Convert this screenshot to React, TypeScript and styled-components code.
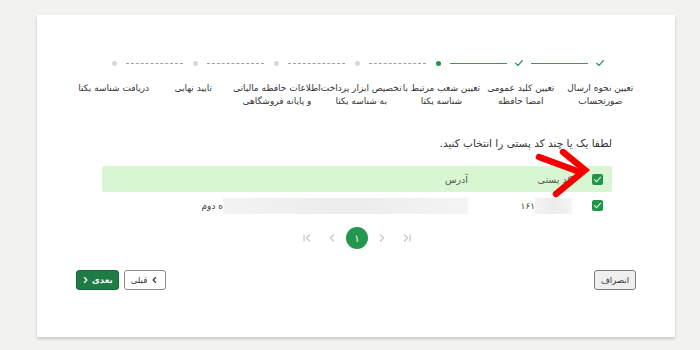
import React from 'react'
import styled, { createGlobalStyle } from 'styled-components'

type StepState = 'done' | 'current' | 'todo'

const steps: { lines: string[]; state: StepState }[] = [
  { lines: ['تعیین نحوه ارسال', 'صورتحساب'], state: 'done' },
  { lines: ['تعیین کلید عمومی', 'امضا حافظه'], state: 'done' },
  { lines: ['تعیین شعب مرتبط با', 'شناسه یکتا'], state: 'current' },
  { lines: ['تخصیص ابزار پرداخت', 'به شناسه یکتا'], state: 'todo' },
  { lines: ['اطلاعات حافظه مالیاتی', 'و پایانه فروشگاهی'], state: 'todo' },
  { lines: ['تایید نهایی'], state: 'todo' },
  { lines: ['دریافت شناسه یکتا'], state: 'todo' },
]

const CheckIcon = ({ color = '#2e9e57', size = 10 }: { color?: string; size?: number }) => (
  <svg width={size} height={size} viewBox="0 0 12 12">
    <path d="M2 6.3 L4.8 9 L10 3" fill="none" stroke={color} strokeWidth="1.4" strokeLinecap="round" strokeLinejoin="round" />
  </svg>
)

const Chevron = ({ dir }: { dir: 'left' | 'right' }) => (
  <svg width="7" height="8" viewBox="0 0 8 8">
    <path
      d={dir === 'left' ? 'M5.2 1.2 L2.4 4 L5.2 6.8' : 'M2.8 1.2 L5.6 4 L2.8 6.8'}
      fill="none"
      stroke="currentColor"
      strokeWidth="1.4"
      strokeLinecap="round"
      strokeLinejoin="round"
    />
  </svg>
)

const PagerIcon = ({ kind }: { kind: 'first' | 'prev' | 'next' | 'last' }) => (
  <svg width="10" height="10" viewBox="0 0 10 10">
    {kind === 'first' && <path d="M2 2 V8 M7.5 2 L4.5 5 L7.5 8" />}
    {kind === 'prev' && <path d="M6.5 2 L3.5 5 L6.5 8" />}
    {kind === 'next' && <path d="M3.5 2 L6.5 5 L3.5 8" />}
    {kind === 'last' && <path d="M8 2 V8 M2.5 2 L5.5 5 L2.5 8" />}
  </svg>
)

const App = () => {
  return (
    <Page>
      <GlobalStyle />
      <Card>
        <Stepper>
          <Track>
            {steps.map((s, i) => (
              <React.Fragment key={s.lines[0]}>
                {i > 0 && <Connector done={s.state !== 'todo'} />}
                <Marker>
                  {s.state === 'done' && <CheckIcon />}
                  {s.state !== 'done' && <Dot active={s.state === 'current'} />}
                </Marker>
              </React.Fragment>
            ))}
          </Track>
          <Labels>
            {steps.map((s) => (
              <Label key={s.lines[0]}>
                {s.lines.map((l) => (
                  <div key={l}>{l}</div>
                ))}
              </Label>
            ))}
          </Labels>
        </Stepper>

        <Section>
          <Hint>لطفا یک یا چند کد پستی را انتخاب کنید.</Hint>
          <TableWrap>
            <HeadRow>
              <BoxCell>
                <Checkbox>
                  <CheckIcon color="#fff" size={9} />
                </Checkbox>
              </BoxCell>
              <CodeCell>کد پستی</CodeCell>
              <AddressCell>آدرس</AddressCell>
            </HeadRow>
            <BodyRow>
              <BoxCell>
                <Checkbox>
                  <CheckIcon color="#fff" size={9} />
                </Checkbox>
              </BoxCell>
              <CodeCell>
                <Blur w={37} />
                <CellText>۱۶۱</CellText>
              </CodeCell>
              <AddressCell>
                <Blur w={245} />
                <CellText>ه دوم</CellText>
              </AddressCell>
            </BodyRow>
            <Arrow width="56" height="50" viewBox="0 0 56 50">
              <path d="M4 8 L42 22" stroke="#f40000" strokeWidth="6.5" strokeLinecap="round" />
              <path d="M28 3 L50 21 L21 45" fill="none" stroke="#f40000" strokeWidth="6.5" strokeLinejoin="miter" strokeLinecap="round" />
            </Arrow>
          </TableWrap>

          <Pager>
            <PagerButton><PagerIcon kind="first" /></PagerButton>
            <PagerButton><PagerIcon kind="prev" /></PagerButton>
            <PageCircle>۱</PageCircle>
            <PagerButton><PagerIcon kind="next" /></PagerButton>
            <PagerButton><PagerIcon kind="last" /></PagerButton>
          </Pager>
        </Section>

        <Footer>
          <CancelButton>انصراف</CancelButton>
          <NavGroup>
            <OutlineButton>
              <Chevron dir="left" />
              قبلی
            </OutlineButton>
            <PrimaryButton>
              بعدی
              <Chevron dir="right" />
            </PrimaryButton>
          </NavGroup>
        </Footer>
      </Card>
    </Page>
  )
}

const GlobalStyle = createGlobalStyle`
  html, body {
    margin: 0;
    padding: 0;
    background: #f2f2f0;
  }
  body {
    font-family: "DejaVu Sans", "Noto Sans", sans-serif;
  }
`

const Page = styled.div`
  width: 700px;
  height: 350px;
  box-sizing: border-box;
  padding: 15px 25px 13px 37px;
`

const Card = styled.div`
  direction: rtl;
  height: 322px;
  box-sizing: border-box;
  background: #fff;
  box-shadow: 0 2px 3px rgba(0, 0, 0, 0.18);
  padding: 41px 35px 0 37px;
  display: flex;
  flex-direction: column;
`

const Stepper = styled.div`
  display: flex;
  flex-direction: column;
  gap: 12px;
`

const Track = styled.div`
  display: flex;
  align-items: center;
  height: 14px;
  padding: 0 33px;
`

const Marker = styled.div`
  width: 14px;
  height: 14px;
  display: flex;
  align-items: center;
  justify-content: center;
`

const Dot = styled.span<{ active: boolean }>`
  width: 5px;
  height: 5px;
  border-radius: 50%;
  background: ${(p) => (p.active ? '#23914d' : '#d6d6d6')};
`

const Connector = styled.div<{ done: boolean }>`
  flex: 1;
  margin: 0 5px;
  border-top: ${(p) => (p.done ? '1.5px solid #2e9e57' : '1px dashed #a0a0a0')};
`

const Labels = styled.div`
  display: grid;
  grid-template-columns: repeat(7, 1fr);
`

const Label = styled.div`
  font-size: 9px;
  line-height: 13px;
  color: #333;
  text-align: center;
  white-space: nowrap;
  display: flex;
  flex-direction: column;
  align-items: center;
`

const Section = styled.div`
  padding: 0 28px;
  margin-top: 28px;
  display: flex;
  flex-direction: column;
`

const Hint = styled.div`
  font-size: 10.5px;
  color: #333;
  line-height: 14px;
  margin-bottom: 16px;
`

const TableWrap = styled.div`
  position: relative;
`

const HeadRow = styled.div`
  display: flex;
  align-items: center;
  height: 26px;
  background: #d9f6d3;
  border-radius: 2px;
  font-size: 9.5px;
  color: #555;
`

const BodyRow = styled.div`
  display: flex;
  align-items: center;
  height: 27px;
  font-size: 9px;
  color: #444;
`

const BoxCell = styled.div`
  width: 40px;
  padding-right: 9px;
  box-sizing: border-box;
  display: flex;
  align-items: center;
`

const CodeCell = styled.div`
  width: 104px;
  display: flex;
  align-items: center;
`

const AddressCell = styled.div`
  flex: 1;
  display: flex;
  align-items: center;
`

const CellText = styled.span`
  white-space: nowrap;
`

const Blur = styled.span<{ w: number }>`
  display: inline-block;
  width: ${(p) => p.w}px;
  height: 16px;
  background: linear-gradient(90deg, #f3f3f3, #ececec 50%, #f4f4f4);
`

const Checkbox = styled.span`
  width: 11px;
  height: 11px;
  border-radius: 2px;
  background: #1f9549;
  display: flex;
  align-items: center;
  justify-content: center;
`

const Arrow = styled.svg`
  position: absolute;
  top: -17px;
  right: 21px;
`

const Pager = styled.div`
  direction: ltr;
  display: flex;
  align-items: center;
  justify-content: center;
  gap: 3px;
  margin-top: 8px;
`

const PagerButton = styled.span`
  width: 22px;
  height: 22px;
  display: flex;
  align-items: center;
  justify-content: center;
  stroke: #c4c4c4;
  fill: none;
  stroke-width: 1.2;
  stroke-linecap: round;
  stroke-linejoin: round;
`

const PageCircle = styled.span`
  width: 22px;
  height: 22px;
  border-radius: 50%;
  background: #23964f;
  color: #fff;
  font-size: 10px;
  display: flex;
  align-items: center;
  justify-content: center;
`

const Footer = styled.div`
  display: flex;
  justify-content: space-between;
  align-items: center;
  margin-top: 21px;
  padding: 0 4px 0 2px;
`

const NavGroup = styled.div`
  display: flex;
  gap: 5px;
`

const BaseButton = styled.button`
  height: 20px;
  border-radius: 3px;
  font-family: "DejaVu Sans", sans-serif;
  font-size: 8.5px;
  padding: 0 7px;
  display: flex;
  align-items: center;
  gap: 4px;
  cursor: pointer;
`

const CancelButton = styled(BaseButton)`
  background: #efefef;
  border: 1px solid #7d7d7d;
  color: #333;
  padding: 0 6px;
`

const OutlineButton = styled(BaseButton)`
  background: #fff;
  border: 1px solid #8a8a8a;
  color: #333;
  padding: 0 7px 0 6px;
`

const PrimaryButton = styled(BaseButton)`
  background: #1d7b43;
  border: 1px solid #166a37;
  color: #fff;
  font-weight: bold;
  padding: 0 5px;
  gap: 3px;
`

export default App
